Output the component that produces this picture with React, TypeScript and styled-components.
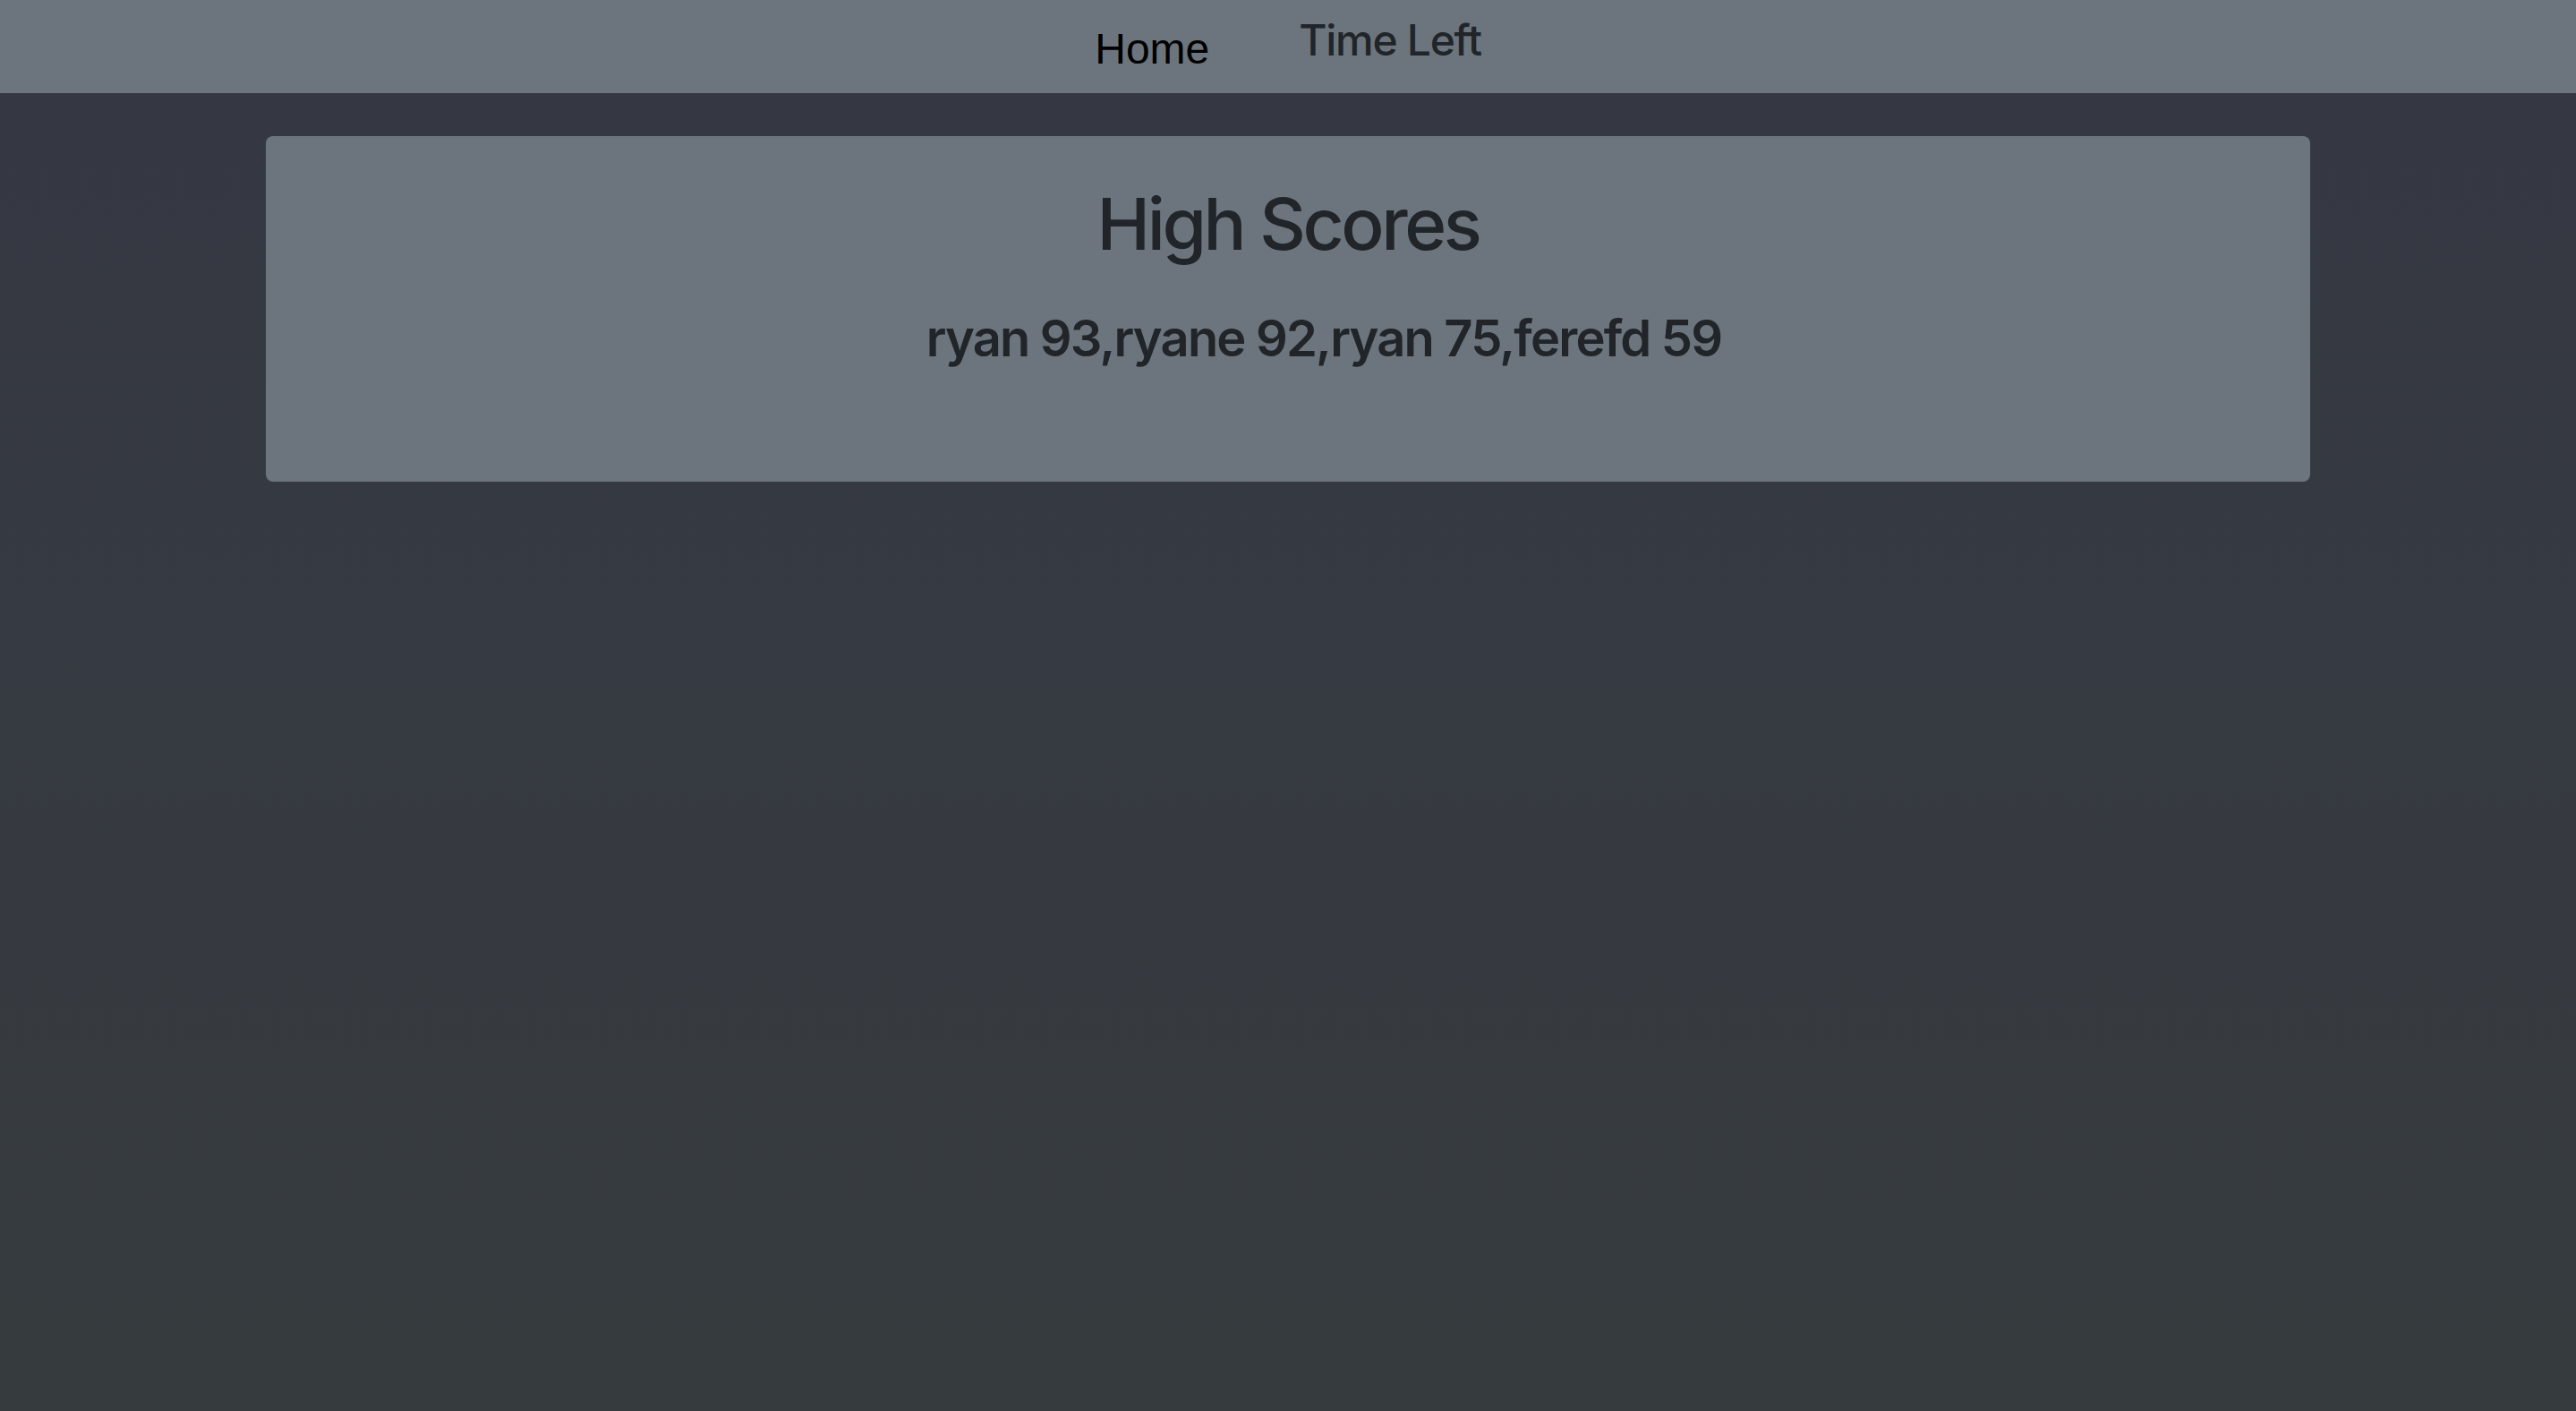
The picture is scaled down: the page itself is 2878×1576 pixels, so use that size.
import React from "react";
import styled, { createGlobalStyle } from "styled-components";

const GlobalStyle = createGlobalStyle`
  html, body {
    margin: 0;
    padding: 0;
    min-height: 100%;
  }
  body {
    background: linear-gradient(180deg, #353843 0%, #363b3e 100%);
    font-family: Inter, "Noto Sans", sans-serif;
    color: #212529;
  }
`;

const Page = styled.div`
  min-height: 100vh;
  display: flex;
  flex-direction: column;
`;

const NavBar = styled.nav`
  height: 104px;
  background: #6c757d;
  display: flex;
  justify-content: center;
  align-items: flex-start;
  gap: 100px;
`;

const HomeLink = styled.a`
  margin-top: 27px;
  font-family: "Liberation Sans", Arial, sans-serif;
  font-size: 48px;
  line-height: normal;
  color: #000;
  text-decoration: none;
`;

const TimeLeft = styled.h2`
  margin: 16px 0 0;
  font-family: Inter, "Noto Sans", sans-serif;
  font-size: 48px;
  font-weight: 500;
  line-height: 1.2;
  letter-spacing: -1.3px;
  color: #212529;
`;

const Card = styled.section`
  margin: 48px 297px 0;
  padding: 50px 0 126px;
  background: #6c757d;
  border-radius: 8px;
`;

const Title = styled.h1`
  margin: 0;
  font-size: 80px;
  font-weight: 500;
  line-height: 1.2;
  letter-spacing: -3.4px;
  text-align: center;
  color: #212529;
`;

const Scores = styled.p`
  margin: 47px 0 0;
  padding-left: 80px;
  font-size: 56px;
  font-weight: 600;
  line-height: 1.2;
  letter-spacing: -1.8px;
  text-align: center;
  color: #212529;
`;

const scores = [
  { name: "ryan", score: 93 },
  { name: "ryane", score: 92 },
  { name: "ryan", score: 75 },
  { name: "ferefd", score: 59 },
];

export default function App() {
  return (
    <>
      <GlobalStyle />
      <Page>
        <NavBar>
          <HomeLink href="#">Home</HomeLink>
          <TimeLeft>Time Left</TimeLeft>
        </NavBar>
        <Card>
          <Title>High Scores</Title>
          <Scores>{scores.map((s) => `${s.name} ${s.score}`).join(",")}</Scores>
        </Card>
      </Page>
    </>
  );
}
